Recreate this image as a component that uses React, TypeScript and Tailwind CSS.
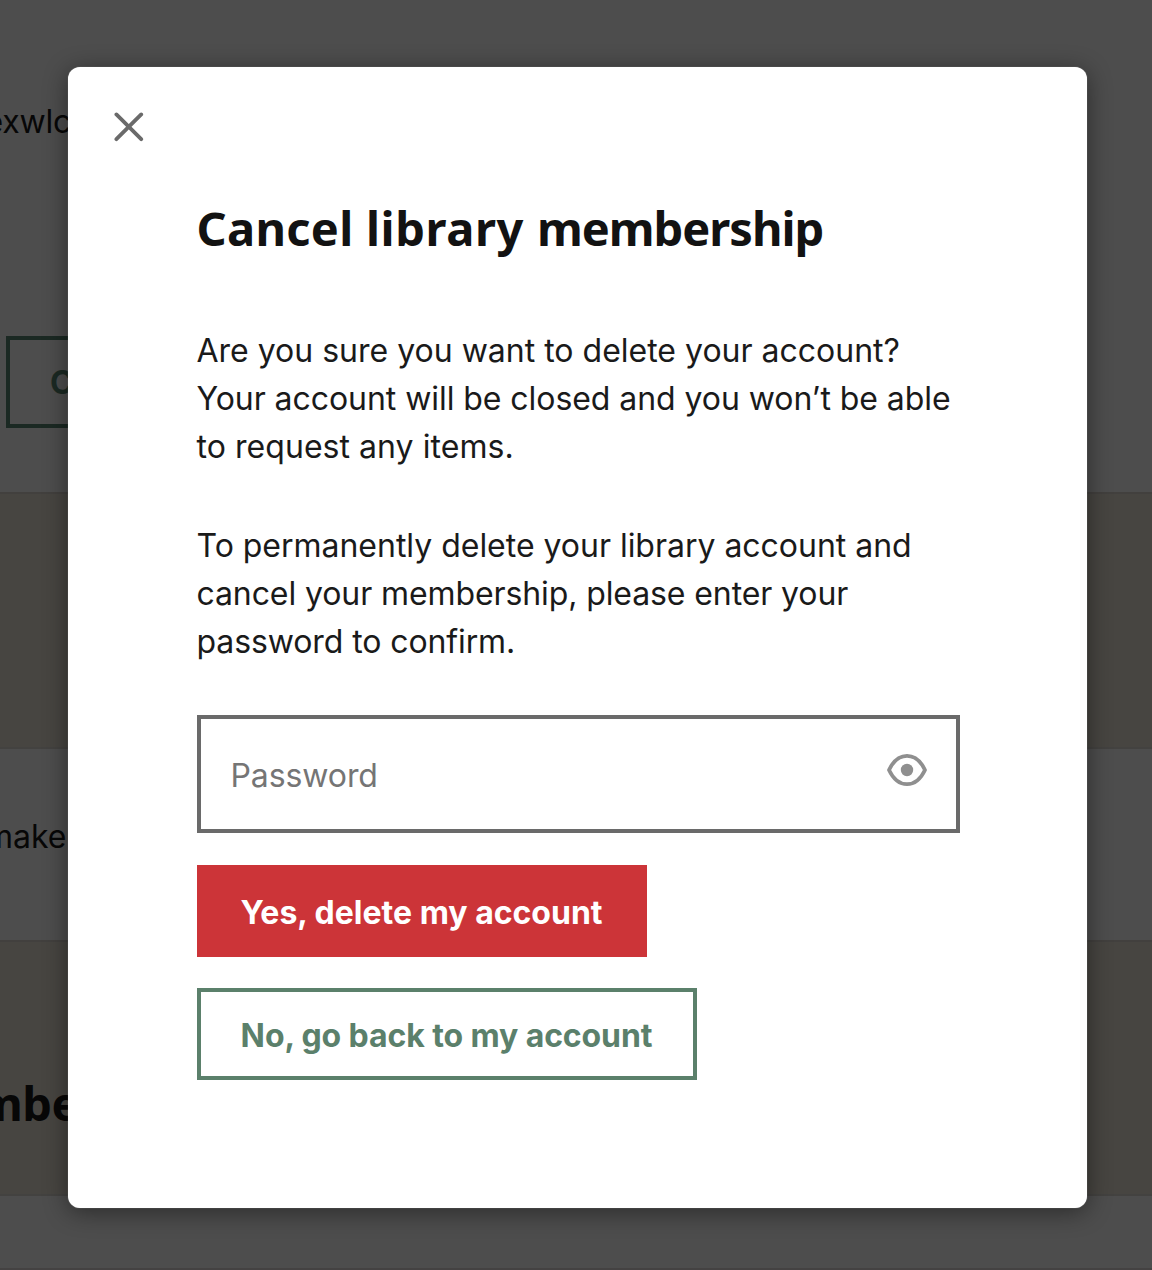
function CloseIcon() {
  return (
    <svg width="30" height="30" viewBox="0 0 30 30" fill="none" stroke="#6a6a6a" strokeWidth="3.8" strokeLinecap="round">
      <path d="M2.400 2.400 27.200 27.200M27.200 2.400 2.400 27.200" />
    </svg>
  );
}

function EyeIcon() {
  return (
    <svg width="40" height="34" viewBox="0 0 40 34" fill="none">
      <path
        d="M2 17C6.500 7.500 13 2.800 20 2.800S33.500 7.500 38 17C33.500 26.500 27 31.200 20 31.200S6.500 26.500 2 17Z"
        stroke="#8f8f8f"
        strokeWidth="3.8"
        strokeLinejoin="round"
      />
      <circle cx="20" cy="17" r="6.200" fill="#8f8f8f" />
    </svg>
  );
}

function Backdrop() {
  return (
    <div className="flex h-full flex-col overflow-hidden bg-[#4d4d4d] whitespace-nowrap text-[#070707]">
      <section className="h-[492px] shrink-0">
        <p className="ml-[-15.5px] pt-[98px] text-[32px] leading-[48px] tracking-[-0.2px]">exwlc</p>
        <div className="mt-[190px] ml-[6px] flex h-[92px] w-[300px] items-center border-4 border-[#1b2923] pt-[2px] pl-[40px] text-[32px] font-bold text-[#1b2923]">
          C
        </div>
      </section>
      <section className="h-[255px] shrink-0 border-t-2 border-[#42403e] bg-[#474541]" />
      <section className="h-[193px] shrink-0 border-t-2 border-[#434240]">
        <p className="ml-[-15px] pt-[64px] text-[32px] leading-[48px]">make</p>
      </section>
      <section className="h-[254px] shrink-0 border-t-2 border-[#42403e] bg-[#474541]">
        <h2 className="ml-[-23px] pt-[131px] font-['Noto_Sans'] text-[47px] leading-[60px] font-bold tracking-[-0.5px]">
          mbe
        </h2>
      </section>
      <section className="flex-1 border-t-2 border-b-2 border-t-[#434240] border-b-[#444242]" />
    </div>
  );
}

export default function App() {
  return (
    <main className="relative h-[1270px] w-[1152px] overflow-hidden font-['Inter',sans-serif]">
      <Backdrop />
      <div
        role="dialog"
        className="absolute top-[67px] left-[68px] h-[1141px] w-[1019px] rounded-[12px] bg-white px-[128.500px] text-[#1a1a1a] shadow-[0_0_1px_rgba(255,255,255,0.5),0_4px_24px_rgba(0,0,0,0.45)]"
      >
        <button aria-label="Close" className="mt-[45px] ml-[-83px] block">
          <CloseIcon />
        </button>
        <h1 className="mt-[56px] font-['Noto_Sans',sans-serif] text-[47px] leading-[60px] font-bold whitespace-nowrap text-[#121212]">
          <span className="tracking-[0.3px]">Cancel </span>
          <span className="tracking-[0.6px]">library </span>
          <span className="tracking-[-1px]">membership</span>
        </h1>
        <div className="mt-[69px] text-[32px] leading-[48px] whitespace-nowrap">
          <p>
            <span>Are you sure you want to delete your account?</span>
            <br />
            <span className="tracking-[-0.06px]">Your account will be closed and you won’t be able</span>
            <br />
            <span className="tracking-[0.05px]">to request any items.</span>
          </p>
          <p className="mt-[51px]">
            <span className="tracking-[-0.02px]">To permanently delete your library account and</span>
            <br />
            <span className="tracking-[-0.1px]">cancel your membership, please enter your</span>
            <br />
            <span className="tracking-[-0.1px]">password to confirm.</span>
          </p>
        </div>
        <div className="mt-[49px] flex h-[118px] w-[763px] items-center justify-between border-4 border-[#6a6a6a] pr-[29px] pl-[30px]">
          <span className="mt-[4px] text-[32px] tracking-[-0.1px] text-[#757575]">Password</span>
          <span className="mb-[8px]">
            <EyeIcon />
          </span>
        </div>
        <button className="mt-[32px] flex h-[92px] w-[450px] items-center justify-center bg-[#cc3438] pt-[4px] text-[32px] font-bold whitespace-nowrap text-white">
          Yes, delete my account
        </button>
        <button className="mt-[31px] flex h-[92px] w-[500px] items-center justify-center border-4 border-[#5b806b] pt-[4px] text-[32px] font-bold tracking-[-0.1px] whitespace-nowrap text-[#5b806b]">
          No, go back to my account
        </button>
      </div>
    </main>
  );
}
